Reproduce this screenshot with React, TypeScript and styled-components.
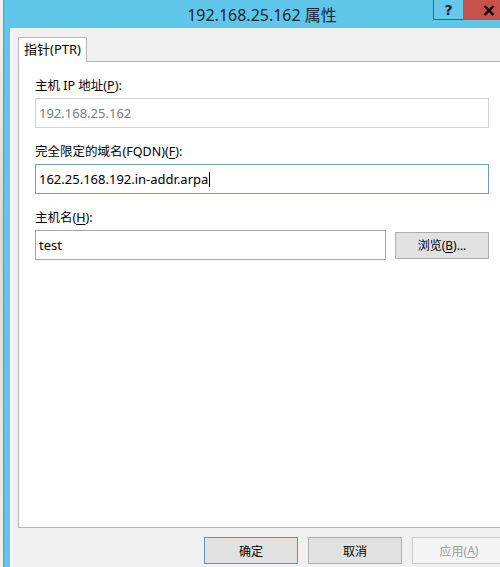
import React from "react";
import styled, { createGlobalStyle } from "styled-components";

const GlobalStyle = createGlobalStyle`
  html, body {
    margin: 0;
    padding: 0;
  }
  body {
    width: 500px;
    height: 567px;
    overflow: hidden;
    background: #e9e9e9;
    font-family: "Noto Sans", "Noto Sans CJK SC", sans-serif;
    color: #000;
  }
`;

type BoxState = "disabled" | "focused" | "normal";
type ButtonKind = "default" | "normal" | "disabled";

const Screen = styled.div`
  display: flex;
  width: 500px;
  height: 567px;
  overflow: hidden;
`;

const DesktopEdge = styled.div`
  flex: 0 0 3px;
  background: linear-gradient(#f4f4f4, #dadada 40%, #f0f0f0);
`;

const Window = styled.div`
  flex: 0 0 518px;
  display: flex;
  flex-direction: column;
  background: #5fc6e9;
  box-shadow: inset 1px 0 0 #3f9fcd;
`;

const TitleBar = styled.div`
  flex: 0 0 28px;
  display: grid;
  grid-template-columns: 88px 1fr 82px;
  padding-right: 6px;
`;

const Title = styled.div`
  grid-column: 2;
  align-self: center;
  text-align: center;
  font-size: 16px;
  color: #1b2631;
  white-space: nowrap;
`;

const CaptionButtons = styled.div`
  display: flex;
  align-self: start;
  height: 20px;
`;

const HelpButton = styled.div`
  width: 30px;
  box-sizing: border-box;
  display: flex;
  align-items: center;
  justify-content: center;
  background: #66c9eb;
  border-left: 1px solid #2e6888;
  border-bottom: 1px solid #2e6888;
  font-family: "DejaVu Sans", sans-serif;
  font-weight: bold;
  font-size: 14px;
  color: #0c2030;
`;

const CloseButton = styled.div`
  width: 52px;
  display: flex;
  align-items: center;
  justify-content: center;
  background: #c7504b;
`;

const Client = styled.div`
  flex: 1;
  display: flex;
  flex-direction: column;
  margin: 0 7px;
  padding: 9px 8px 0;
  background: #f0f0f0;
  box-shadow: inset 2px 0 0 #f8fbfc;
`;

const TabStrip = styled.div`
  display: flex;
  margin-bottom: -1px;
  position: relative;
  z-index: 1;
`;

const Tab = styled.div`
  height: 25px;
  box-sizing: border-box;
  padding: 0 5px;
  line-height: 23px;
  font-size: 13px;
  background: #fff;
  border: 1px solid #b8b8b8;
  border-bottom: none;
`;

const Panel = styled.div`
  height: 467px;
  box-sizing: border-box;
  display: flex;
  flex-direction: column;
  gap: 16px;
  padding: 16px 16px 0;
  background: #fff;
  border: 1px solid #b4b4b4;
`;

const Field = styled.div`
  display: flex;
  flex-direction: column;
  gap: 4px;
`;

const Label = styled.div`
  font-size: 12.5px;
  line-height: 16px;
  white-space: nowrap;

  u {
    text-decoration-thickness: 1px;
    text-underline-offset: 2px;
  }
`;

const boxBorder: Record<BoxState, string> = {
  disabled: "#d2d2d2",
  focused: "#6d9cd0",
  normal: "#a3a3a3",
};

const TextBox = styled.div<{ $state: BoxState }>`
  flex: 1 1 auto;
  height: 30px;
  box-sizing: border-box;
  display: flex;
  align-items: center;
  padding: 0 3px;
  border: 1px solid ${(p) => boxBorder[p.$state]};
  background: #fff;
  font-size: 13px;
  color: ${(p) => (p.$state === "disabled" ? "#7b7b7b" : "#000")};
  white-space: nowrap;
`;

const Caret = styled.span`
  display: inline-block;
  width: 1px;
  height: 15px;
  margin-left: 1px;
  background: #000;
`;

const InlineRow = styled.div`
  display: flex;
  align-items: center;
  gap: 9px;
`;

const buttonBorder: Record<ButtonKind, string> = {
  default: "#5f90c6",
  normal: "#adadad",
  disabled: "#cbcbcb",
};

const Button = styled.div<{ $kind: ButtonKind }>`
  flex: 0 0 94px;
  height: 27px;
  box-sizing: border-box;
  display: flex;
  align-items: center;
  justify-content: center;
  font-size: 12px;
  background: ${(p) => (p.$kind === "disabled" ? "#f4f4f4" : "#e1e1e1")};
  border: 1px solid ${(p) => buttonBorder[p.$kind]};
  color: ${(p) => (p.$kind === "disabled" ? "#9d9d9d" : "#000")};

  u {
    text-decoration-thickness: 1px;
    text-underline-offset: 2px;
  }
`;

const ButtonRow = styled.div`
  display: flex;
  justify-content: flex-end;
  gap: 10px;
  margin-top: 9px;
`;

const CloseGlyph = () => (
  <svg width="12" height="11" viewBox="0 0 12 11">
    <path d="M1.5 1 L10.5 10 M10.5 1 L1.5 10" stroke="#000" strokeWidth="2.4" />
  </svg>
);

export default function App() {
  return (
    <>
      <GlobalStyle />
      <Screen>
        <DesktopEdge />
        <Window>
          <TitleBar>
            <Title>192.168.25.162 属性</Title>
            <CaptionButtons>
              <HelpButton>?</HelpButton>
              <CloseButton>
                <CloseGlyph />
              </CloseButton>
            </CaptionButtons>
          </TitleBar>
          <Client>
            <TabStrip>
              <Tab>指针(PTR)</Tab>
            </TabStrip>
            <Panel>
              <Field>
                <Label>
                  主机 IP 地址(<u>P</u>):
                </Label>
                <TextBox $state="disabled">192.168.25.162</TextBox>
              </Field>
              <Field>
                <Label>
                  完全限定的域名(FQDN)(<u>F</u>):
                </Label>
                <TextBox $state="focused">
                  162.25.168.192.in-addr.arpa
                  <Caret />
                </TextBox>
              </Field>
              <Field>
                <Label>
                  主机名(<u>H</u>):
                </Label>
                <InlineRow>
                  <TextBox $state="normal">test</TextBox>
                  <Button $kind="normal">
                    浏览(<u>B</u>)...
                  </Button>
                </InlineRow>
              </Field>
            </Panel>
            <ButtonRow>
              <Button $kind="default">确定</Button>
              <Button $kind="normal">取消</Button>
              <Button $kind="disabled">
                应用(<u>A</u>)
              </Button>
            </ButtonRow>
          </Client>
        </Window>
      </Screen>
    </>
  );
}
